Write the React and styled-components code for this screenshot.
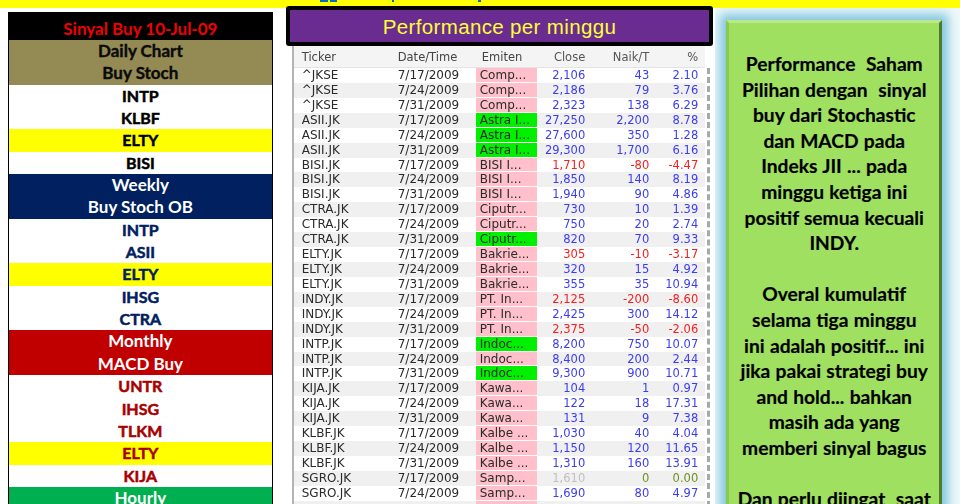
import styled, { createGlobalStyle } from "styled-components";

const dates = ["7/17/2009", "7/24/2009", "7/31/2009"];

// ticker, emiten, then [close, naik, pct, green emiten] for each week
const stocks = [
    ["^JKSE", "Comp...", [["2,106", "43", "2.10"], ["2,186", "79", "3.76"], ["2,323", "138", "6.29"]]],
    ["ASII.JK", "Astra I...", [["27,250", "2,200", "8.78", true], ["27,600", "350", "1.28", true], ["29,300", "1,700", "6.16", true]]],
    ["BISI.JK", "BISI I...", [["1,710", "-80", "-4.47"], ["1,850", "140", "8.19"], ["1,940", "90", "4.86"]]],
    ["CTRA.JK", "Ciputr...", [["730", "10", "1.39"], ["750", "20", "2.74"], ["820", "70", "9.33", true]]],
    ["ELTY.JK", "Bakrie...", [["305", "-10", "-3.17"], ["320", "15", "4.92"], ["355", "35", "10.94"]]],
    ["INDY.JK", "PT. In...", [["2,125", "-200", "-8.60"], ["2,425", "300", "14.12"], ["2,375", "-50", "-2.06"]]],
    ["INTP.JK", "Indoc...", [["8,200", "750", "10.07", true], ["8,400", "200", "2.44"], ["9,300", "900", "10.71", true]]],
    ["KIJA.JK", "Kawa...", [["104", "1", "0.97"], ["122", "18", "17.31"], ["131", "9", "7.38"]]],
    ["KLBF.JK", "Kalbe ...", [["1,030", "40", "4.04"], ["1,150", "120", "11.65"], ["1,310", "160", "13.91"]]],
    ["SGRO.JK", "Samp...", [["1,610", "0", "0.00"], ["1,690", "80", "4.97"]]],
];

const rows = stocks.flatMap(([ticker, emiten, weeks]) =>
    weeks.map(([close, naik, pct, hit], i) => ({ ticker, emiten, date: dates[i], close, naik, pct, hit }))
);

const toneOf = (naik) => (naik === "0" ? "flat" : naik.startsWith("-") ? "down" : "up");

const signals = [
    { title: ["Daily Chart", "Buy Stoch"], bg: "#948a54", head: "#0a0a0a", stroke: "0.4px", ink: "#000", items: ["INTP", "KLBF", "*ELTY", "BISI"] },
    { title: ["Weekly", "Buy Stoch OB"], bg: "#002060", head: "#fff", stroke: "0", ink: "#002060", items: ["INTP", "ASII", "*ELTY", "IHSG", "CTRA"] },
    { title: ["Monthly", "MACD Buy"], bg: "#c00000", head: "#fff", stroke: "0", ink: "#a80000", items: ["UNTR", "IHSG", "TLKM", "*ELTY", "KIJA"] },
    { title: ["Hourly"], bg: "#00b050", head: "#fff", stroke: "0", ink: "#000", items: [] },
];

const note = `Performance  Saham
Pilihan dengan  sinyal
buy dari Stochastic
dan MACD pada
Indeks JII ... pada
minggu ketiga ini
positif semua kecuali
INDY.

Overal kumulatif
selama tiga minggu
ini adalah positif... ini
jika pakai strategi buy
and hold... bahkan
masih ada yang
memberi sinyal bagus

Dan perlu diingat  saat`;

export default function App() {
    return (
        <Page>
            <GlobalStyle />
            <TopStrip>
                <Descender $w={8} $left={320} />
                <Descender $w={7} $left={2} />
                <Descender $w={2} $left={55} />
                <Descender $w={3} $left={84} />
            </TopStrip>
            <Columns>
                <SignalTable>
                    <SignalTitle>Sinyal Buy 10-Jul-09</SignalTitle>
                    {signals.map((group) => (
                        <div key={group.title[0]}>
                            {group.title.map((line) => (
                                <GroupHead key={line} $bg={group.bg} $ink={group.head} $stroke={group.stroke}>{line}</GroupHead>
                            ))}
                            {group.items.map((item) => (
                                <SignalRow key={item} $hot={item[0] === "*"} $ink={group.ink}>
                                    {item.replace("*", "")}
                                </SignalRow>
                            ))}
                        </div>
                    ))}
                </SignalTable>

                <Middle>
                    <PerfTitle>Performance per minggu</PerfTitle>
                    <Grid>
                        <HeadRow>
                            <Cell>Ticker</Cell>
                            <Cell>Date/Time</Cell>
                            <Cell>Emiten</Cell>
                            <Num>Close</Num>
                            <Num>Naik/T</Num>
                            <Num>%</Num>
                        </HeadRow>
                        <GridBody>
                            {rows.map((r, i) => {
                                const tone = toneOf(r.naik);
                                return (
                                    <DataRow key={r.ticker + r.date} $shade={i % 2 === 1}>
                                        <Cell>{r.ticker}</Cell>
                                        <Cell>{r.date}</Cell>
                                        <Emiten $hit={r.hit}>{r.emiten}</Emiten>
                                        <Num $tone={tone === "flat" ? "muted" : tone}>{r.close}</Num>
                                        <Num $tone={tone}>{r.naik}</Num>
                                        <Num $tone={tone}>{r.pct}</Num>
                                    </DataRow>
                                );
                            })}
                            <DataRow $shade>
                                <Cell />
                                <Cell />
                                <Emiten />
                            </DataRow>
                        </GridBody>
                    </Grid>
                </Middle>

                <NotePanel>
                    <NoteBox>{note}</NoteBox>
                </NotePanel>
            </Columns>
        </Page>
    );
}

const GlobalStyle = createGlobalStyle`
    html, body {
        margin: 0;
        background: #fff;
    }
`;

const Page = styled.div`
    width: 960px;
    height: 504px;
    overflow: hidden;
    background: #fff;
`;

const TopStrip = styled.div`
    height: 8px;
    background: #ffff00;
    display: flex;
    align-items: flex-start;
`;

const Descender = styled.span`
    width: ${(props) => props.$w}px;
    height: 2px;
    margin-left: ${(props) => props.$left}px;
    background: #0070c0;
`;

const Columns = styled.div`
    display: flex;
    align-items: flex-start;
`;

const SignalTable = styled.div`
    width: 263px;
    margin: 4px 0 0 8px;
    border: 1px solid #000;
    border-width: 0 1px;
    font-family: Lato, "Open Sans", sans-serif;
    font-weight: 700;
    font-size: 17px;
    text-align: center;
`;

const SignalTitle = styled.div`
    height: 28px;
    line-height: 34px;
    background: #000;
    color: #f00000;
`;

const GroupHead = styled.div`
    height: 22.35px;
    line-height: 22.35px;
    background: ${(props) => props.$bg};
    color: ${(props) => props.$ink};
    -webkit-text-stroke: ${(props) => props.$stroke} ${(props) => props.$ink};
`;

const SignalRow = styled.div`
    height: 22.35px;
    line-height: 22.35px;
    font-size: 16px;
    background: ${(props) => (props.$hot ? "#ffff00" : "#fff")};
    color: ${(props) => props.$ink};
    -webkit-text-stroke: 0.5px ${(props) => props.$ink};
`;

const Middle = styled.div`
    width: 428px;
    margin: -2px 0 0 13px;
`;

const PerfTitle = styled.div`
    height: 40px;
    box-sizing: border-box;
    border: 4px solid #000;
    border-radius: 3px;
    background: #6a2c91;
    color: #ffff33;
    font-family: "Liberation Sans", Arial, sans-serif;
    font-size: 20.5px;
    letter-spacing: 0.35px;
    line-height: 34px;
    text-align: center;
`;

const Grid = styled.div`
    margin-left: 6px;
    width: 418px;
    box-sizing: border-box;
    border-left: 2px solid #b4b4b4;
    background: #fff;
    font-family: "DejaVu Sans", sans-serif;
    font-size: 12px;
    color: #2a2a2a;
    filter: blur(0.3px);
`;

const rowColumns = "98px 84px 61px 52px 64px 49px";

const HeadRow = styled.div`
    display: grid;
    grid-template-columns: ${rowColumns};
    width: 411px;
    height: 22px;
    align-items: center;
    background: #f4f4f4;
    border-bottom: 1px solid #e4e4e4;
    box-sizing: border-box;
    color: #444;
    font-size: 11.5px;
`;

const GridBody = styled.div`
    border-right: 3px dashed #a8a8a8;
`;

const DataRow = styled.div`
    display: grid;
    grid-template-columns: ${rowColumns};
    width: 411px;
    height: 14.93px;
    line-height: 14.93px;
    align-items: stretch;
    background: ${(props) => (props.$shade ? "#f0f0f0" : "#fff")};
`;

const Cell = styled.div`
    padding-left: 6px;
    white-space: nowrap;
    overflow: hidden;

    &:first-child {
        padding-left: 8px;
    }
`;

const Emiten = styled(Cell)`
    padding-left: 4px;
    background: ${(props) => (props.$hit ? "#00f000" : "#ffc0cb")};
    border-bottom: 1px solid #fff;
    box-sizing: border-box;
`;

const toneColors = { up: "#3c3cf0", down: "#f52020", flat: "#6f8f20", muted: "#c0c0c0" };

const Num = styled.div`
    padding-right: 3.5px;
    text-align: right;
    white-space: nowrap;
    font-size: 11.5px;
    color: ${(props) => toneColors[props.$tone] || "#555"};
`;

const NotePanel = styled.div`
    width: 245px;
    height: 504px;
    margin-left: 2px;
    padding: 12px 0 0 11px;
    box-sizing: border-box;
    overflow: hidden;
    background: #eef8fb;
`;

const NoteBox = styled.div`
    width: 216px;
    height: 500px;
    box-sizing: border-box;
    padding: 28px 0 0;
    border-style: solid;
    border-width: 3px;
    border-color: #b9e98a #4f7c2c #4f7c2c #88c94e;
    box-shadow: 0 0 10px 6px #80c6dd;
    background: #a0e060;
    color: #000;
    font-family: Lato, "Open Sans", sans-serif;
    font-weight: 700;
    font-size: 19.2px;
    line-height: 25.6px;
    word-spacing: 0.6px;
    text-align: center;
    white-space: pre;
    -webkit-text-stroke: 0.2px #000;
`;
